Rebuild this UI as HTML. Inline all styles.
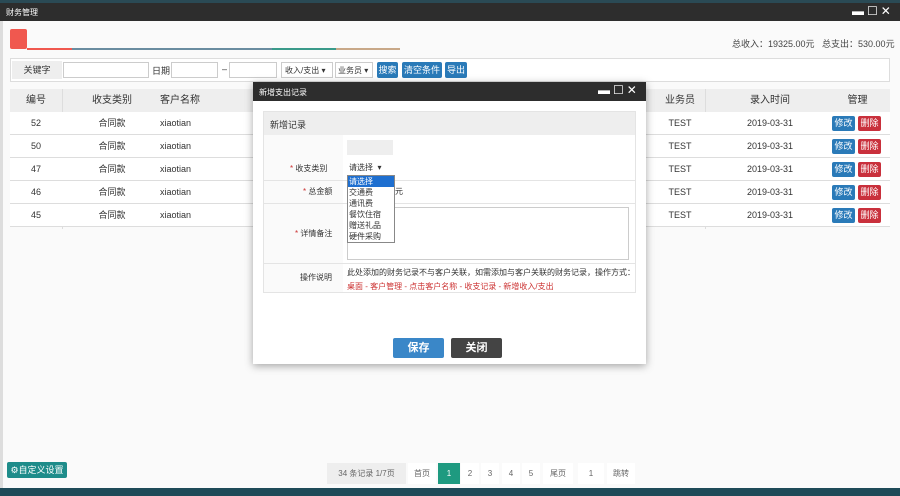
<!DOCTYPE html>
<html><head><meta charset="utf-8"><style>
*{margin:0;padding:0;box-sizing:border-box}
body{width:900px;height:496px;overflow:hidden;background:#fafafa;font-family:"Liberation Sans","Noto Sans CJK SC",sans-serif;font-size:9px;color:#333;position:relative}
.a{position:absolute;white-space:nowrap}
.btn{position:absolute;color:#fff;font-size:9px;text-align:center;border-radius:2px;white-space:nowrap}
.row{position:absolute;left:10px;width:880px;height:23px;border-bottom:1px solid #ddd;background:#fff}
.row span,.hd span{position:absolute;top:0;line-height:23px;height:23px;text-align:center}
.in{position:absolute;top:62px;height:16px;background:#fff;border:1px solid #ccc;white-space:nowrap;overflow:hidden}
.pg{position:absolute;top:463px;height:21px;line-height:21px;font-size:8px;color:#666;text-align:center;background:#fff}
</style></head><body>
<div class="a" style="left:0;top:0;width:900px;height:4px;background:#2a4a55"></div>
<div class="a" style="left:0;top:3px;width:900px;height:18px;background:#2d2d2d"></div>
<div class="a" style="left:6px;top:7px;color:#fff;font-size:8px">财务管理</div>
<div class="a" style="left:852px;top:4px;color:#fff;font-size:12px;letter-spacing:3px">▬☐✕</div>
<div class="a" style="left:0;top:21px;width:3px;height:467px;background:#ddd"></div>
<div class="a" style="left:10px;top:29px;width:17px;height:20px;background:#f0584f;border-radius:2px"></div>
<div class="a" style="left:27px;top:48px;width:45px;height:2px;background:#f0584f"></div>
<div class="a" style="left:72px;top:48px;width:200px;height:2px;background:#6a8ca0"></div>
<div class="a" style="left:272px;top:48px;width:64px;height:2px;background:#3a9a8a"></div>
<div class="a" style="left:336px;top:48px;width:64px;height:2px;background:#c8a888"></div>
<div class="a" style="left:732px;top:37px;font-size:9px;color:#444">总收入：19325.00元 &nbsp; 总支出：530.00元</div>
<div class="a" style="left:10px;top:58px;width:880px;height:24px;border:1px solid #ddd;background:#fff"></div>
<div class="a" style="left:12px;top:61px;width:50px;height:18px;background:#eee;text-align:center;line-height:18px">关键字</div>
<div class="in" style="left:63px;width:86px"></div>
<div class="a" style="left:152px;top:64px">日期</div>
<div class="in" style="left:171px;width:47px"></div>
<div class="a" style="left:222px;top:64px">–</div>
<div class="in" style="left:229px;width:48px"></div>
<div class="in" style="left:281px;width:52px;padding:2px 3px;font-size:8px">收入/支出 ▾</div>
<div class="in" style="left:335px;width:38px;padding:2px 2px;font-size:8px">业务员 ▾</div>
<div class="btn" style="left:377px;top:62px;width:21px;height:16px;line-height:16px;background:#2a7ab8">搜索</div>
<div class="btn" style="left:402px;top:62px;width:40px;height:16px;line-height:16px;background:#2a7ab8">清空条件</div>
<div class="btn" style="left:445px;top:62px;width:22px;height:16px;line-height:16px;background:#2a7ab8">导出</div>
<div class="a hd" style="left:10px;top:89px;width:880px;height:23px;background:#eee;font-size:10px">
<span style="left:0;width:52px">编号</span><span style="left:52px;width:100px">收支类别</span><span style="left:150px">客户名称</span>
<span style="left:640px;width:60px">业务员</span><span style="left:705px;width:110px">录入时间</span><span style="left:815px;width:65px">管理</span></div>
<div class="a" style="left:62px;top:89px;width:1px;height:140px;background:#ddd"></div>
<div class="a" style="left:705px;top:89px;width:1px;height:140px;background:#ddd"></div>
<div class="row" style="top:112px"><span style="left:0;width:52px">52</span><span style="left:52px;width:100px">合同款</span><span style="left:150px">xiaotian</span><span style="left:640px;width:60px">TEST</span><span style="left:705px;width:110px">2019-03-31</span><i class="btn" style="left:822px;top:4px;width:23px;height:15px;line-height:15px;background:#2a7ab8;font-style:normal">修改</i><i class="btn" style="left:848px;top:4px;width:23px;height:15px;line-height:15px;background:#c9303c;font-style:normal">删除</i></div>
<div class="row" style="top:135px"><span style="left:0;width:52px">50</span><span style="left:52px;width:100px">合同款</span><span style="left:150px">xiaotian</span><span style="left:640px;width:60px">TEST</span><span style="left:705px;width:110px">2019-03-31</span><i class="btn" style="left:822px;top:4px;width:23px;height:15px;line-height:15px;background:#2a7ab8;font-style:normal">修改</i><i class="btn" style="left:848px;top:4px;width:23px;height:15px;line-height:15px;background:#c9303c;font-style:normal">删除</i></div>
<div class="row" style="top:158px"><span style="left:0;width:52px">47</span><span style="left:52px;width:100px">合同款</span><span style="left:150px">xiaotian</span><span style="left:640px;width:60px">TEST</span><span style="left:705px;width:110px">2019-03-31</span><i class="btn" style="left:822px;top:4px;width:23px;height:15px;line-height:15px;background:#2a7ab8;font-style:normal">修改</i><i class="btn" style="left:848px;top:4px;width:23px;height:15px;line-height:15px;background:#c9303c;font-style:normal">删除</i></div>
<div class="row" style="top:181px"><span style="left:0;width:52px">46</span><span style="left:52px;width:100px">合同款</span><span style="left:150px">xiaotian</span><span style="left:640px;width:60px">TEST</span><span style="left:705px;width:110px">2019-03-31</span><i class="btn" style="left:822px;top:4px;width:23px;height:15px;line-height:15px;background:#2a7ab8;font-style:normal">修改</i><i class="btn" style="left:848px;top:4px;width:23px;height:15px;line-height:15px;background:#c9303c;font-style:normal">删除</i></div>
<div class="row" style="top:204px"><span style="left:0;width:52px">45</span><span style="left:52px;width:100px">合同款</span><span style="left:150px">xiaotian</span><span style="left:640px;width:60px">TEST</span><span style="left:705px;width:110px">2019-03-31</span><i class="btn" style="left:822px;top:4px;width:23px;height:15px;line-height:15px;background:#2a7ab8;font-style:normal">修改</i><i class="btn" style="left:848px;top:4px;width:23px;height:15px;line-height:15px;background:#c9303c;font-style:normal">删除</i></div>

<!-- modal -->
<div class="a" style="left:253px;top:82px;width:393px;height:282px;background:#fff;box-shadow:0 2px 8px rgba(0,0,0,.35)"></div>
<div class="a" style="left:253px;top:82px;width:393px;height:19px;background:#2d2d2d"></div>
<div class="a" style="left:259px;top:87px;color:#fff;font-size:8px">新增支出记录</div>
<div class="a" style="left:598px;top:83px;color:#fff;font-size:12px;letter-spacing:3px">▬☐✕</div>
<div class="a" style="left:263px;top:111px;width:373px;height:182px;background:#fff;border:1px solid #e4e4e4"></div>
<div class="a" style="left:264px;top:112px;width:371px;height:23px;background:#eee;padding:6px 6px;font-size:9px">新增记录</div>
<div class="a" style="left:264px;top:135px;width:79px;height:157px;background:#fafafa"></div>
<div class="a" style="left:264px;top:180px;width:371px;height:1px;background:#e4e4e4"></div>
<div class="a" style="left:264px;top:203px;width:371px;height:1px;background:#e4e4e4"></div>
<div class="a" style="left:264px;top:263px;width:371px;height:1px;background:#e4e4e4"></div>
<div class="a" style="left:290px;top:163px;font-size:8px"><b style="color:#c33;font-weight:normal">*</b> 收支类别</div>
<div class="a" style="left:303px;top:186px;font-size:8px"><b style="color:#c33;font-weight:normal">*</b> 总金额</div>
<div class="a" style="left:295px;top:228px;font-size:8px"><b style="color:#c33;font-weight:normal">*</b> 详情备注</div>
<div class="a" style="left:300px;top:272px;font-size:8px">操作说明</div>
<div class="a" style="left:347px;top:140px;width:46px;height:15px;background:#eee"></div>
<div class="a" style="left:347px;top:159px;width:48px;height:16px;padding:3px 2px;font-size:8px;background:#fff">请选择 &nbsp;▾</div>
<div class="a" style="left:395px;top:186px;font-size:8px">元</div>
<div class="a" style="left:347px;top:207px;width:282px;height:53px;border:1px solid #ccc;background:#fff"></div>
<div class="a" style="left:347px;top:175px;width:48px;height:68px;border:1px solid #888;background:#fff;font-size:8px;line-height:11px">
<div style="background:#1e6fd0;color:#fff;padding-left:1px">请选择</div><div style="padding-left:1px">交通费</div><div style="padding-left:1px">通讯费</div><div style="padding-left:1px">餐饮住宿</div><div style="padding-left:1px">赠送礼品</div><div style="padding-left:1px">硬件采购</div></div>
<div class="a" style="left:347px;top:267px;font-size:8px;color:#333">此处添加的财务记录不与客户关联，如需添加与客户关联的财务记录，操作方式：</div>
<div class="a" style="left:347px;top:281px;font-size:8px;color:#c33">桌面 - 客户管理 - 点击客户名称 - 收支记录 - 新增收入/支出</div>
<div class="btn" style="left:393px;top:338px;width:51px;height:20px;line-height:20px;background:#3a87c8;font-size:11px;font-weight:bold">保存</div>
<div class="btn" style="left:451px;top:338px;width:51px;height:20px;line-height:20px;background:#444;font-size:11px;font-weight:bold">关闭</div>

<div class="btn" style="left:7px;top:462px;width:60px;height:16px;line-height:16px;background:#1e8c8a">⚙自定义设置</div>
<div class="pg" style="left:327px;width:79px;background:#eee">34 条记录 1/7页</div>
<div class="pg" style="left:408px;width:28px">首页</div>
<div class="pg" style="left:438px;width:22px;background:#1e9a80;color:#fff">1</div>
<div class="pg" style="left:461px;width:18px">2</div>
<div class="pg" style="left:481px;width:18px">3</div>
<div class="pg" style="left:502px;width:18px">4</div>
<div class="pg" style="left:522px;width:18px">5</div>
<div class="pg" style="left:543px;width:30px">尾页</div>
<div class="pg" style="left:578px;width:26px">1</div>
<div class="pg" style="left:607px;width:28px">跳转</div>
<div class="a" style="left:0;top:488px;width:900px;height:8px;background:#1e4a58"></div>
</body></html>
